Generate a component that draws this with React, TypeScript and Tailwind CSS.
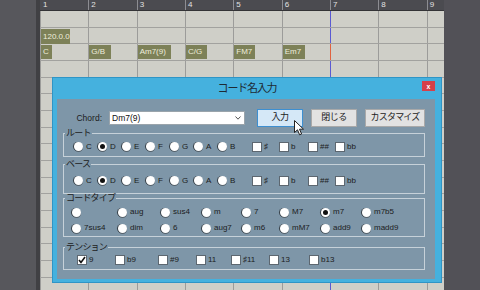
import React from 'react';

const bars = [1, 2, 3, 4, 5, 6, 7, 8, 9];
const chords: Record<number, { label: string; w: string }> = {
    0: { label: 'C', w: 'w-[11px]' },
    1: { label: 'G/B', w: 'w-[22px]' },
    2: { label: 'Am7(9)', w: 'w-[33px]' },
    3: { label: 'C/G', w: 'w-[21px]' },
    4: { label: 'FM7', w: 'w-[21px]' },
    5: { label: 'Em7', w: 'w-[22px]' },
};

const roots = ['C', 'D', 'E', 'F', 'G', 'A', 'B'];
const accidentals = [
    { label: '♯', w: 'w-[27px]' },
    { label: 'b', w: 'w-[29px]' },
    { label: '##', w: 'w-[27px]' },
    { label: 'bb', w: '' },
];
const chordTypes = ['', 'aug', 'sus4', 'm', '7', 'M7', 'm7', 'm7b5', '7sus4', 'dim', '6', 'aug7', 'm6', 'mM7', 'add9', 'madd9'];
const tensions = [
    { label: '9', w: 'w-[38px]', on: true },
    { label: 'b9', w: 'w-[43px]' },
    { label: '#9', w: 'w-[38px]' },
    { label: '11', w: 'w-[35px]' },
    { label: '♯11', w: 'w-[38px]' },
    { label: '13', w: 'w-[40px]' },
    { label: 'b13', w: '' },
];

function cellBorder(i: number, playhead = 'border-[#5a5ad2]') {
    return i === 6 ? playhead : 'border-[#9c9c9a]';
}

function Radio({ label, on }: { label: string; on?: boolean }) {
    return (
        <div className="flex items-center gap-[3px]">
            <div className="w-[9px] h-[9px] rounded-full bg-white shadow-[-1px_0_0_#3a444c,0_1px_0_#56626c] flex items-center justify-center shrink-0">
                {on && <div className="w-[5px] h-[5px] rounded-full bg-[#111]" />}
            </div>
            {label && <span className="text-[8px] leading-[10px] text-[#1c1c1c]">{label}</span>}
        </div>
    );
}

function Check({ label, on }: { label: string; on?: boolean }) {
    return (
        <div className="flex items-center gap-[2px]">
            <div className="w-[10px] h-[10px] bg-white border border-[#5d6770] flex items-center justify-center shrink-0">
                {on && (
                    <svg width="8" height="8" viewBox="0 0 8 8">
                        <path d="M1 4 L3 6.5 L7 1" fill="none" stroke="#111" strokeWidth="1.6" />
                    </svg>
                )}
            </div>
            <span className="text-[8px] leading-[10px] text-[#1c1c1c]">{label}</span>
        </div>
    );
}

function Group({ title, className, children }: { title: string; className: string; children: React.ReactNode }) {
    return (
        <fieldset className={`ml-[6px] w-[362px] border border-[#c6d1d9] ${className}`}>
            <legend className="ml-[1px] px-[1px] text-[9px] leading-[8px] tracking-[-0.8px] text-[#1c1c1c]">{title}</legend>
            {children}
        </fieldset>
    );
}

export default function App() {
    return (
        <div className="w-[480px] h-[290px] flex overflow-hidden relative font-['Liberation_Sans','Noto_Sans_CJK_JP',sans-serif]">
            <div className="w-[36px] bg-[#57575c] shrink-0" />
            <div className="w-[4px] bg-[#404044] shrink-0" />

            {/* Track area */}
            <div className="w-[404px] shrink-0 flex flex-col overflow-hidden bg-[#cfcfc8]">
                <div className="h-[5px] bg-[#3a3a3e]" />
                <div className="h-[11px] flex bg-[#4b4b50] border-b border-[#333336]">
                    {bars.map((b, i) => (
                        <div key={b} className={`w-[48.33px] shrink-0 border-l ${i === 0 ? 'border-transparent' : 'border-[#8d8d92]'} pl-[2px] text-[8px] leading-[10px] text-[#e2e2e2]`}>
                            {b}
                        </div>
                    ))}
                </div>
                {Array.from({ length: 17 }).map((_, r) => (
                    <div key={r} className="h-[16.67px] shrink-0 flex border-b border-[#a2a29f]">
                        {bars.map((b, i) => (
                            <div key={b} className={`w-[48.33px] shrink-0 border-l ${r === 2 ? cellBorder(i, 'border-[#e0623f]') : cellBorder(i)}`}>
                                {r === 1 && i === 0 && (
                                    <div className="w-[29px] h-[15px] mt-[1px] bg-[#7d8158] text-[8px] leading-[15px] text-[#eeeedd] pl-[2px]">120.0.0</div>
                                )}
                                {r === 2 && chords[i] && (
                                    <div className={`${chords[i].w} h-[14px] mt-[1px] bg-[#7d8158] text-[8px] leading-[14px] text-[#eeeedd] pl-[2px] whitespace-nowrap`}>
                                        {chords[i].label}
                                    </div>
                                )}
                            </div>
                        ))}
                    </div>
                ))}
            </div>

            <div className="flex-1 bg-[#525157]" />

            {/* Dialog */}
            <div className="absolute left-[52px] top-[77px] w-[390px] h-[206px] bg-[#45b1de] border border-[#2f95c6] flex flex-col">
                <div className="h-[21px] shrink-0 relative flex items-center justify-center">
                    <span className="text-[11px] tracking-[-1.2px] text-[#1e2a33]">コード名入力</span>
                    <div className="absolute right-[6px] top-[3px] w-[13px] h-[10px] bg-[#d6404a] flex items-center justify-center text-[7px] leading-[7px] font-bold text-white">x</div>
                </div>
                <div className="flex-1 ml-[4px] mr-[6px] mb-[3px] bg-[#7e96a8] flex flex-col">
                    <div className="mt-[10px] h-[18px] flex items-center">
                        <span className="w-[45px] text-right text-[8.5px] text-[#1c1c1c]">Chord:</span>
                        <div className="ml-[7px] w-[136px] h-[14px] bg-white border border-[#9aa4ab] flex items-center justify-between pl-[2px] pr-[3px]">
                            <span className="text-[8.5px] text-[#111]">Dm7(9)</span>
                            <svg width="6" height="4" viewBox="0 0 6 4">
                                <path d="M0.5 0.5 L3 3.2 L5.5 0.5" fill="none" stroke="#555" strokeWidth="1" />
                            </svg>
                        </div>
                        <button className="ml-[12px] w-[46px] h-[18px] bg-[#d5e8f7] border border-[#3d8fd1] text-[9px] tracking-[-0.5px] text-[#1c1c1c]">入力</button>
                        <button className="ml-[8px] w-[46px] h-[18px] bg-[#e2e2e2] border border-[#a9a9a9] text-[9px] tracking-[-0.5px] text-[#1c1c1c]">閉じる</button>
                        <button className="ml-[8px] w-[60px] h-[18px] bg-[#e2e2e2] border border-[#a9a9a9] text-[9px] tracking-[-0.8px] text-[#1c1c1c]">カスタマイズ</button>
                    </div>

                    <Group title="ルート" className="mt-[2px]">
                        <div className="h-[19px] flex items-center pl-[10px]">
                            {roots.map(r => (
                                <div key={r} className="w-[24px] shrink-0"><Radio label={r} on={r === 'D'} /></div>
                            ))}
                            <div className="ml-[10px] flex">
                                {accidentals.map(a => (
                                    <div key={a.label} className={`${a.w} shrink-0`}><Check label={a.label} /></div>
                                ))}
                            </div>
                        </div>
                    </Group>

                    <Group title="ベース" className="mt-[3px]">
                        <div className="h-[25px] flex items-center pl-[10px]">
                            {roots.map(r => (
                                <div key={r} className="w-[24px] shrink-0"><Radio label={r} on={r === 'D'} /></div>
                            ))}
                            <div className="ml-[10px] flex">
                                {accidentals.map(a => (
                                    <div key={a.label} className={`${a.w} shrink-0`}><Check label={a.label} /></div>
                                ))}
                            </div>
                        </div>
                    </Group>

                    <Group title="コードタイプ" className="mt-0">
                        <div className="h-[34px] pt-[4px] pl-[8px] grid grid-cols-[46px_43px_41px_40px_38px_41px_41px_auto] gap-y-[4px] content-start">
                            {chordTypes.map((t, i) => (
                                <div key={i} className="h-[12px] flex items-center"><Radio label={t} on={t === 'm7'} /></div>
                            ))}
                        </div>
                    </Group>

                    <Group title="テンション" className="mt-[6px]">
                        <div className="h-[18px] flex items-center pl-[13px]">
                            {tensions.map(t => (
                                <div key={t.label} className={`${t.w} shrink-0`}><Check label={t.label} on={t.on} /></div>
                            ))}
                        </div>
                    </Group>
                </div>
            </div>

            {/* Mouse cursor */}
            <svg className="absolute left-[294px] top-[120px]" width="11" height="16" viewBox="0 0 11 16">
                <path d="M0.5 0.5 L0.5 12.5 L3.5 9.8 L5.6 14.8 L7.6 14 L5.5 9.2 L9.5 9.2 Z" fill="#fff" stroke="#222" strokeWidth="1" />
            </svg>
        </div>
    );
}
